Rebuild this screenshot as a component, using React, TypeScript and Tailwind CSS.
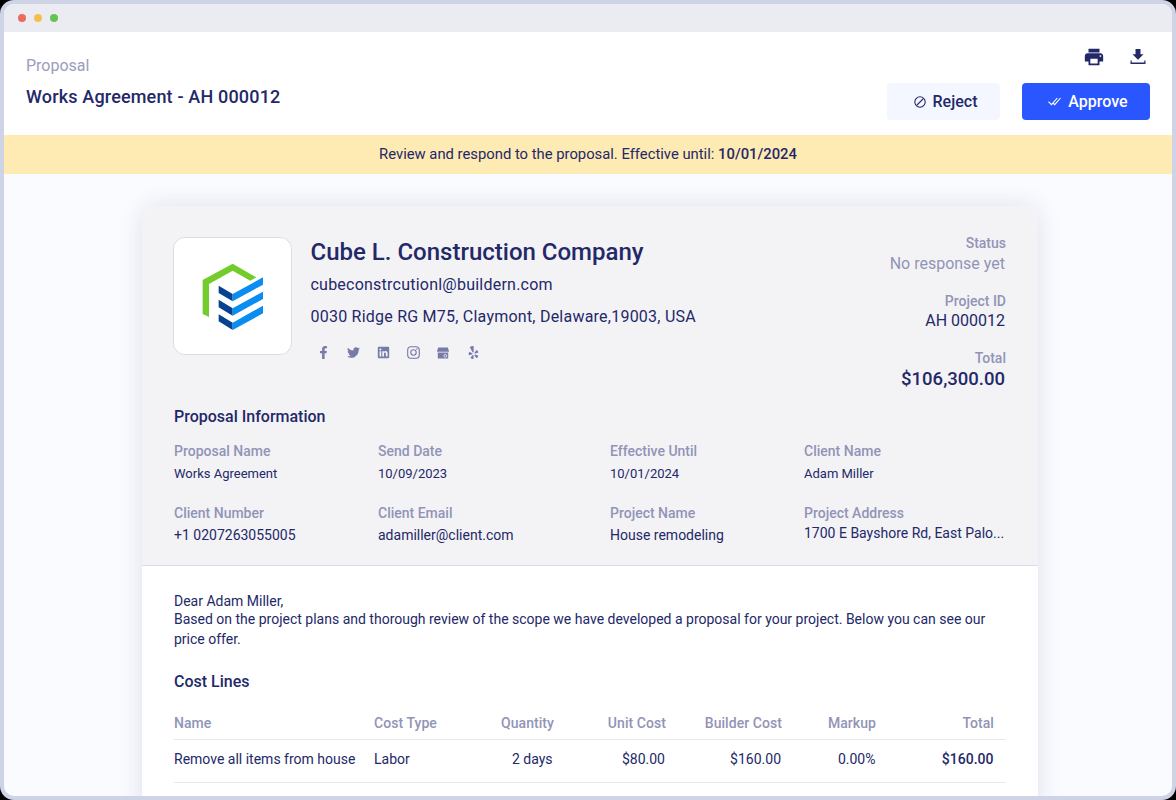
import React from "react";
import { MdPrint } from "react-icons/md";
import { FaFacebookF, FaTwitter, FaLinkedin, FaYelp } from "react-icons/fa";
import { BiLogoInstagram } from "react-icons/bi";

function CubeLogo() {
  return (
    <svg width="90" height="85" viewBox="0 0 270 255" className="shrink-0">
      <path d="M38 177V75L128 26L199 67L181 77L128 47L57 87V186Z" fill="#72cc2b" />
      <path d="M86 92L128 117V139L86 114ZM86 134L128 160V182L86 157ZM86 178L128 203V225L86 199Z" fill="#06428f" />
      <path d="M128 117L219 67V89L128 139ZM128 160L219 110V132L128 182ZM128 203L219 152V175L128 225Z" fill="#0a8df0" />
    </svg>
  );
}

function DownloadIcon() {
  return (
    <svg width="16" height="16" viewBox="0 0 16 16" fill="#232868">
      <path d="M5.500 0h5v5.300h3L8 10.800L2.500 5.300h3ZM.5 11.600h1.200v2h12.600v-2h1.200v3.400H.5Z" />
    </svg>
  );
}

function ShopIcon() {
  return (
    <svg width="12" height="12" viewBox="0 0 12 12">
      <path d="M1.200 .5h9.600L12 4.200a1.400 1.400 0 0 1-.8 1.300V11.500H.8V5.500A1.400 1.400 0 0 1 0 4.200Z" fill="#787ba8" />
      <path d="M0 5.200h12" stroke="#f3f3f6" strokeWidth=".8" />
      <circle cx="8.300" cy="8.800" r="1.400" fill="none" stroke="#f3f3f6" strokeWidth=".8" />
    </svg>
  );
}

type Field = { label: string; value: string; cls: string };

const rowOne: Field[] = [
  { label: "Proposal Name", value: "Works Agreement", cls: "text-[13px] pt-px" },
  { label: "Send Date", value: "10/09/2023", cls: "text-[13px] pt-px" },
  { label: "Effective Until", value: "10/01/2024", cls: "text-[13px] pt-px" },
  { label: "Client Name", value: "Adam Miller", cls: "text-[13px] pt-px" },
];
const rowTwo: Field[] = [
  { label: "Client Number", value: "+1 0207263055005", cls: "text-[14px]" },
  { label: "Client Email", value: "adamiller@client.com", cls: "text-[14px]" },
  { label: "Project Name", value: "House remodeling", cls: "text-[14px]" },
  { label: "Project Address", value: "1700 E Bayshore Rd, East Palo...", cls: "text-[14px] -mt-[2px]" },
];

function Fields({ items }: { items: Field[] }) {
  return (
    <div className="grid grid-cols-[204px_232px_194px_202px]">
      {items.map((f) => (
        <div key={f.label}>
          <div className="text-[14px] leading-[20px] font-medium text-[#9194b6]">{f.label}</div>
          <div className={"leading-[24px] " + f.cls}>{f.value}</div>
        </div>
      ))}
    </div>
  );
}

function Summary({ label, value, cls }: { label: string; value: string; cls: string }) {
  return (
    <div className="h-[57.5px]">
      <div className="text-[14px] leading-[20px] font-medium text-[#9194b6]">{label}</div>
      <div className={"pr-px " + cls}>{value}</div>
    </div>
  );
}

const cols = "grid grid-cols-[200px_100px_80px_112px_116px_94px_118px] w-[832px] border-b border-[#e6e7ef]";

export default function App() {
  return (
    <div className="h-[800px] w-[1176px] bg-black font-['Roboto',sans-serif] text-[#232868]">
      <div className="flex h-full flex-col overflow-hidden rounded-[14px] border-4 border-[#cfd3e6] bg-[#fafbff]">
        <div className="flex h-[28px] shrink-0 items-center gap-2 bg-[#ebecf1] pl-[14px]">
          <span className="size-2 rounded-full bg-[#ed6a5e]" />
          <span className="size-2 rounded-full bg-[#f5bf4f]" />
          <span className="size-2 rounded-full bg-[#61c554]" />
        </div>
        <header className="flex h-[103px] shrink-0 justify-between bg-white pl-[22px] pr-[22px]">
          <div className="pt-[22px]">
            <div className="text-[16px] leading-[24px] text-[#9a9dbd]">Proposal</div>
            <div className="mt-[7px] text-[18px] leading-[24px] font-medium tracking-[0.17px]">Works Agreement - AH 000012</div>
          </div>
          <div className="flex flex-col items-end pt-[14px]">
            <div className="flex items-center gap-[25px] pr-[4px]">
              <MdPrint size={22} />
              <DownloadIcon />
            </div>
            <div className="mt-[15px] flex gap-[22px]">
              <button className="flex h-[37px] w-[113px] items-center justify-center gap-[7px] rounded bg-[#f4f7ff] pl-[4px] text-[16px] leading-[23px] font-medium">
                <svg width="12" height="12" viewBox="0 0 12 12" fill="none" stroke="currentColor" strokeWidth="1.100">
                  <circle cx="6" cy="6" r="5.200" />
                  <path d="M3 9L9 3" />
                </svg>
                Reject
              </button>
              <button className="flex h-[37px] w-[128px] items-center justify-center gap-[7px] rounded bg-[#2a56ff] pl-[4px] text-[16px] leading-[23px] font-medium text-white">
                <svg width="13" height="9" viewBox="0 0 13 9" fill="none" stroke="currentColor" strokeWidth="1.100">
                  <path d="M.5 4.600L3.500 7.700L9.300 1M5.300 6.300L6.700 7.700L12.500 1" />
                </svg>
                Approve
              </button>
            </div>
          </div>
        </header>
        <div className="h-[39px] shrink-0 bg-[#feeab3] text-center text-[14.8px] leading-[38px]">
          Review and respond to the proposal. Effective until: <span className="font-medium">10/01/2024</span>
        </div>
        <main className="ml-[138px] mt-8 h-[620px] w-[896px] shrink-0 rounded-t-[14px] bg-white shadow-[0_0_24px_rgba(35,40,104,0.12)]">
          <section className="h-[360px] rounded-t-[14px] border-b border-[#d9dbe8] bg-[#f3f3f6] px-8">
            <div className="flex h-[200px] pt-[31px]">
              <div className="-ml-px flex h-[118px] w-[119px] shrink-0 justify-center rounded-[12px] border border-[#dcdcec] bg-white pt-[17px] pl-[5px]">
                <CubeLogo />
              </div>
              <div className="ml-[18.500px] grow">
                <div className="text-[24px] leading-[30px] font-medium">Cube L. Construction Company</div>
                <div className="mt-[2px] text-[16px] leading-[32px] tracking-[0.23px]">cubeconstrcutionl@buildern.com</div>
                <div className="text-[16px] leading-[32px] tracking-[0.23px]">0030 Ridge RG M75, Claymont, Delaware,19003, USA</div>
                <div className="mt-[11.500px] flex gap-[16px] pl-[5.500px] text-[#787ba8] [&>span]:flex [&>span]:h-[16px] [&>span]:w-[14px] [&>span]:items-center [&>span]:justify-center">
                  <span><FaFacebookF size={13} /></span>
                  <span><FaTwitter size={13} /></span>
                  <span><FaLinkedin size={13} /></span>
                  <span><BiLogoInstagram size={17} className="shrink-0" /></span>
                  <span><ShopIcon /></span>
                  <span><FaYelp size={13} /></span>
                </div>
              </div>
              <div className="-mt-[4px] text-right">
                <Summary label="Status" value="No response yet" cls="text-[16px] leading-[22px] text-[#9194b6]" />
                <Summary label="Project ID" value="AH 000012" cls="text-[16px] leading-[20px]" />
                <Summary label="Total" value="$106,300.00" cls="pt-px text-[18.500px] leading-[20px] font-medium" />
              </div>
            </div>
            <h2 className="text-[16px] leading-[22px] font-medium">Proposal Information</h2>
            <div className="mt-[13px] flex flex-col gap-[17px]">
              <Fields items={rowOne} />
              <Fields items={rowTwo} />
            </div>
          </section>
          <section className="px-8 pt-[26px]">
            <div className="text-[14px] leading-[18px]">Dear Adam Miller,</div>
            <p className="text-[14px] leading-[19.500px]">
              Based on the project plans and thorough review of the scope we have developed a proposal for your project. Below you can see our
              <br />
              price offer.
            </p>
            <h2 className="mt-[22px] text-[16px] leading-[22px] font-medium">Cost Lines</h2>
            <div className={cols + " mt-[14px] h-[33px] pr-3 text-right text-[14px] leading-[32px] font-medium tracking-[0.06px] text-[#9194b6]"}>
              <span className="text-left">Name</span>
              <span className="text-left">Cost Type</span>
              <span>Quantity</span>
              <span>Unit Cost</span>
              <span>Builder Cost</span>
              <span>Markup</span>
              <span>Total</span>
            </div>
            <div className={cols + " h-[43px] text-right text-[14px] leading-[38px]"}>
              <span className="text-left">Remove all items from house</span>
              <span className="text-left">Labor</span>
              <span className="pr-[1.500px]">2 days</span>
              <span className="pr-px">$80.00</span>
              <span className="pr-px">$160.00</span>
              <span className="pr-[0.500px]">0.00%</span>
              <span className="pr-[0.500px] font-medium">$160.00</span>
            </div>
          </section>
        </main>
      </div>
    </div>
  );
}
